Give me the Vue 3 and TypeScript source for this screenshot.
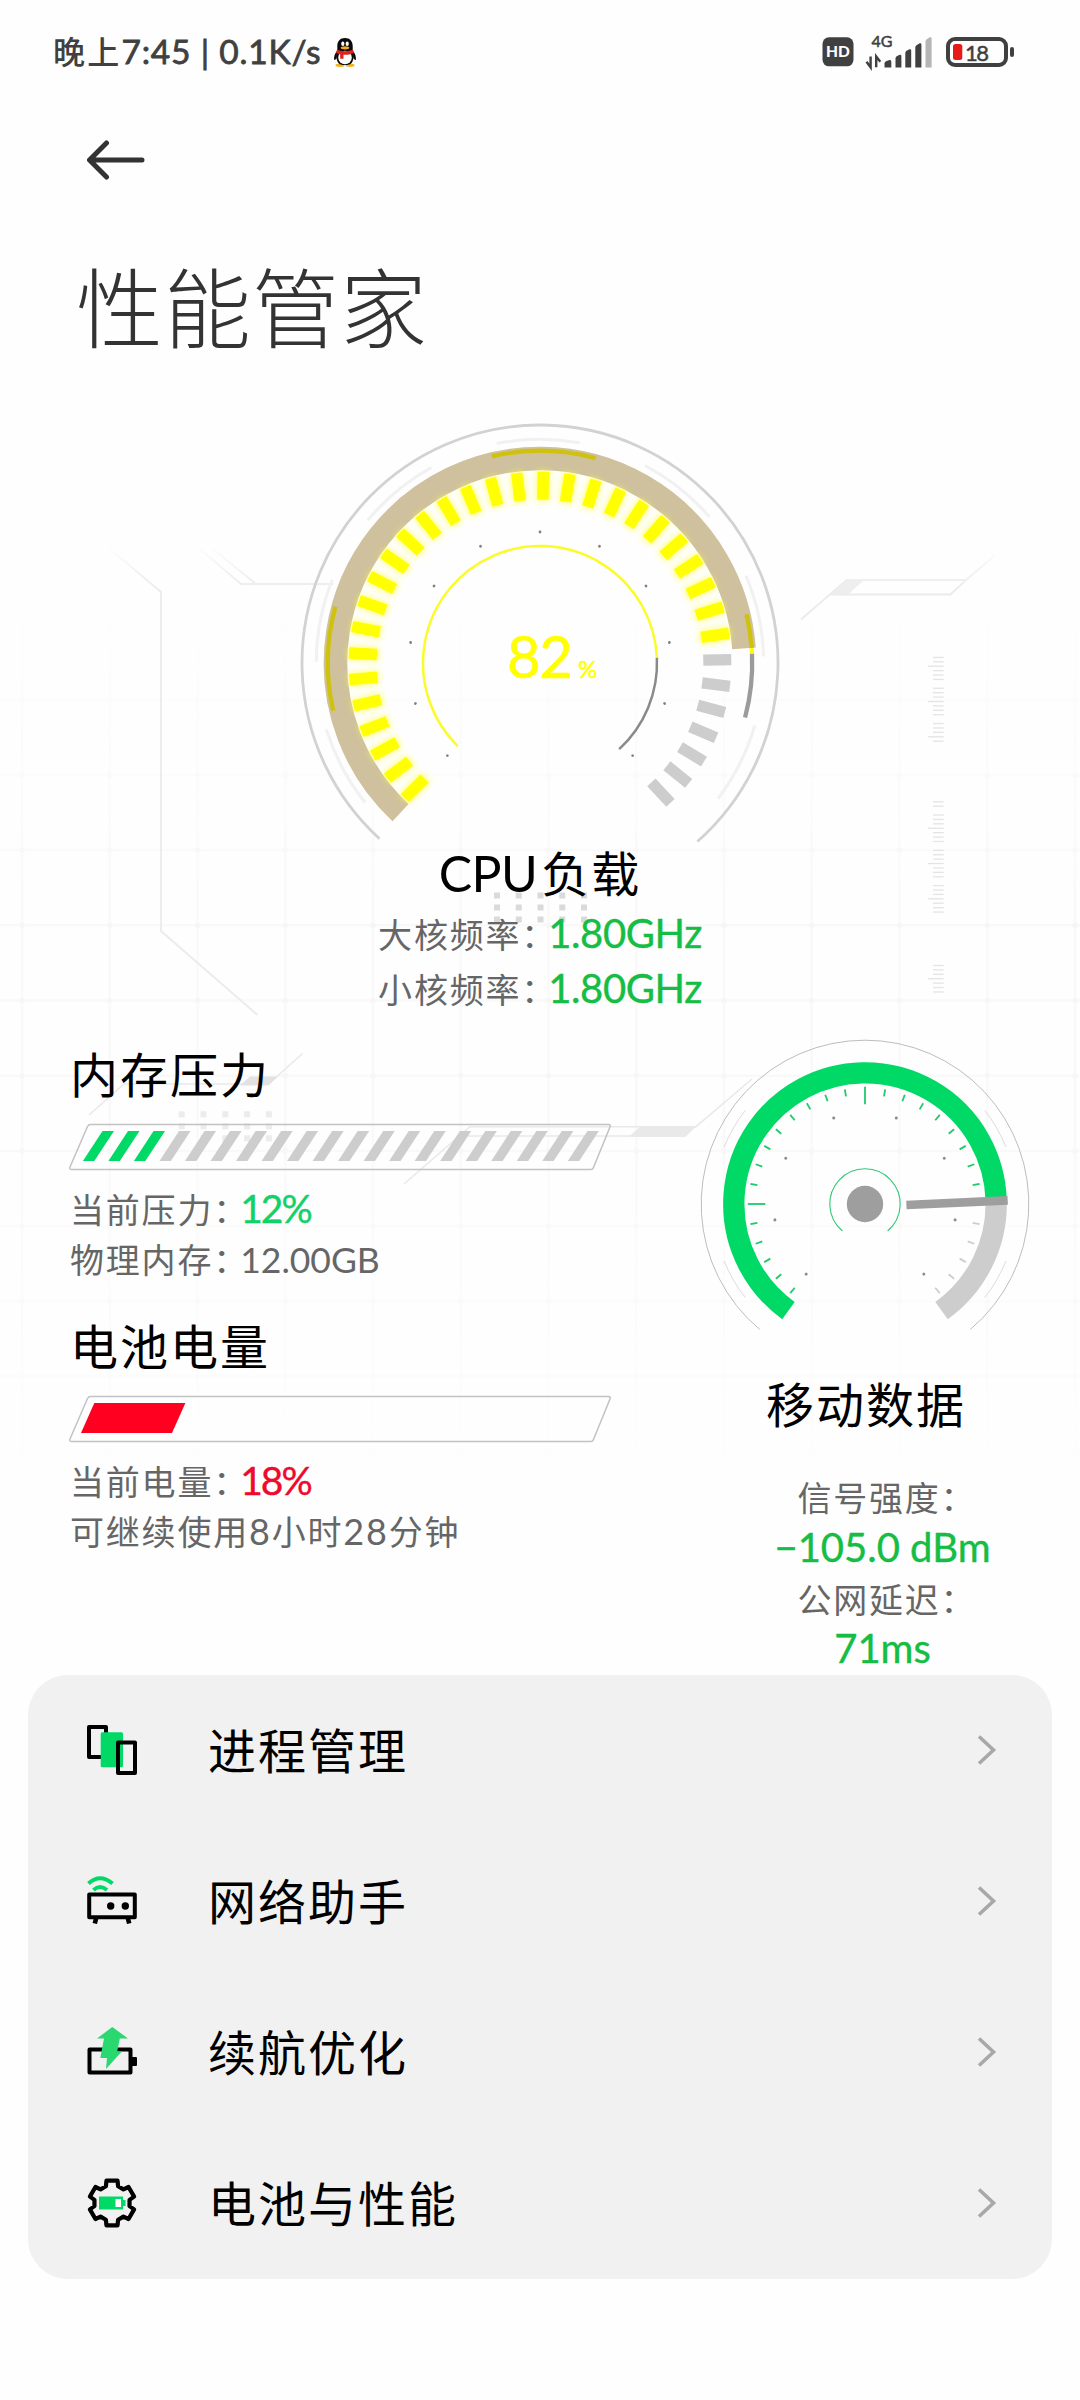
<script setup lang="ts">
interface MenuItem {
  id: 'process' | 'network' | 'endurance' | 'battery'
  label: string
}

const menu: MenuItem[] = [
  { id: 'process', label: '进程管理' },
  { id: 'network', label: '网络助手' },
  { id: 'endurance', label: '续航优化' },
  { id: 'battery', label: '电池与性能' },
]

const round = (n: number) => Math.round(n * 100) / 100

/* Angles are degrees, clockwise from twelve o'clock. */
function point(r: number, deg: number): string {
  const a = (deg * Math.PI) / 180
  return `${round(r * Math.sin(a))} ${round(-r * Math.cos(a))}`
}

function arc(r: number, from: number, to: number): string {
  const large = to - from > 180 ? 1 : 0
  return `M${point(r, from)}A${r} ${r} 0 ${large} 1 ${point(r, to)}`
}

const range = (n: number) => Array.from({ length: n }, (_, i) => i)

const cpuSegments = range(35).map((i) => ({ angle: -135 + i * 8, on: i < 28 }))
const cpuDots = range(11).map((i) => -135 + i * 27)
const cpuFaint: [number, number][] = [
  [-128.6, -107.3], [-89.7, -68.2], [-50.3, -29], [-11.2, 10.2],
  [28, 49.3], [67, 88.3], [106.2, 127.3],
]

const netTicks = range(29)
  .map((i) => -140 + i * 10)
  .filter((a) => a !== 90)
const netDots = [-140, -100, -60, -20, 20, 60, 100, 140]
const netFaint: [number, number][] = [[-128, -112], [-68, -52], [52, 68], [112, 128]]

const stripes = range(20)

const gridX = range(13).map((i) => round(22 + i * 87.75))
const gridY = range(12).map((i) => round(624.5 + i * 75.2))

function ruler(top: number, count: number, longAt: number) {
  return range(count)
    .filter((i) => i % 8 !== (longAt + 4) % 8)
    .map((i) => ({ y: round(top + i * 4.41), long: i % 8 === longAt }))
}
const rulers = [...ruler(657.4, 20, 2), ...ruler(801.8, 26, 6), ...ruler(965.5, 7, 3)]

const gear = (() => {
  const pts: string[] = []
  for (let t = 0; t < 6; t++) {
    const c = t * 60
    pts.push(point(17.8, c - 20), point(23, c - 14), point(23, c + 14), point(17.8, c + 20))
  }
  return pts.join(' ').replace(/(\S+) (\S+)/g, '$1,$2')
})()
</script>

<template>
  <div class="screen">
    <svg class="backdrop" width="1080" height="1675" viewBox="0 0 1080 1675">
      <defs>
        <linearGradient id="fadeY" x1="0" y1="600" x2="0" y2="1480" gradientUnits="userSpaceOnUse">
          <stop offset="0" stop-color="#fff" stop-opacity="0" />
          <stop offset="0.35" stop-color="#fff" />
          <stop offset="0.6" stop-color="#fff" />
          <stop offset="1" stop-color="#fff" stop-opacity="0" />
        </linearGradient>
        <mask id="gridMask" maskUnits="userSpaceOnUse" x="0" y="600" width="1080" height="880">
          <rect x="0" y="600" width="1080" height="880" fill="url(#fadeY)" />
        </mask>
        <linearGradient id="lineFade" x1="0" y1="548" x2="0" y2="590" gradientUnits="userSpaceOnUse">
          <stop offset="0" stop-color="#ebebeb" stop-opacity="0.1" />
          <stop offset="1" stop-color="#ebebeb" />
        </linearGradient>
      </defs>
      <g mask="url(#gridMask)" stroke="#f9f9f9" stroke-width="2.4">
        <line v-for="x in gridX" :key="'x' + x" :x1="x" :x2="x" y1="600" y2="1480" />
        <line v-for="y in gridY" :key="'y' + y" x1="0" x2="1080" :y1="y" :y2="y" />
        <template v-for="x in gridX" :key="'c' + x">
          <circle v-for="y in gridY" :key="y" :cx="x" :cy="y" r="2.8" fill="#f6f6f6" stroke="none" />
        </template>
      </g>
      <g fill="none" stroke="url(#lineFade)" stroke-width="1.8">
        <path d="M110 549L161 592V931L257.500 1015" />
        <path d="M200 549L241 584H333.500M213 549L256 584" />
        <path d="M801 619.500L846.500 580H966L995 555M966 580L950.500 594.500H830" />
      </g>
      <path d="M846.500 580H864L848 594.500H830Z" fill="#eee" />
      <g stroke="#e4e4e4" stroke-width="1.3">
        <line
          v-for="t in rulers"
          :key="t.y"
          :x1="t.long ? 928 : 933"
          x2="943.700"
          :y1="t.y"
          :y2="t.y"
        />
      </g>
      <g fill="#dadada">
        <template v-for="r in 3" :key="r">
          <rect
            v-for="c in 5"
            :key="c"
            :x="494 + (c - 1) * 21.75"
            :y="892.5 + (r - 1) * 12"
            width="6"
            height="6"
          />
        </template>
      </g>
      <g fill="#ececec">
        <template v-for="r in 3" :key="r">
          <rect
            v-for="c in 5"
            :key="c"
            :x="178.7 + (c - 1) * 21.8"
            :y="1111.3 + (r - 1) * 12"
            width="6"
            height="6"
          />
        </template>
      </g>
      <g fill="none" stroke="#e9e9e9" stroke-width="1.6">
        <path d="M89 1115L124 1084H245M268 1084.500L302.500 1053.500" />
        <path d="M404 1184L469.800 1126.700H696L752 1079M457.500 1136H686" />
      </g>
      <path d="M250 1076.500H278L268.500 1085.500H240Z" fill="#e2e2e2" />
      <path d="M640 1126.700H696L685.500 1136.700H629Z" fill="#e9e9e9" />
    </svg>

    <header class="status">
      <div class="status-left">
        <span class="status-text">晚上<span class="lat">7:45 | 0.1K/s</span></span>
        <svg class="qq" width="24" height="30" viewBox="0 0 24 30">
          <ellipse cx="7" cy="28.200" rx="4.500" ry="1.700" fill="#f2b51c" />
          <ellipse cx="17" cy="28.200" rx="4.500" ry="1.700" fill="#f2b51c" />
          <path d="M4 14C1.500 17 .8 20 1.200 23C2.200 23.500 3 22 3.800 20.500ZM20 14c2.500 3 3.200 6 2.800 9c-1 .5-1.800-1-2.600-2.500Z" fill="#0a0a0a" />
          <path d="M12 1C7 1 4.300 4.500 4.300 9v5C3 17 2.800 21 4.500 24.500S9 28 12 28s5.800 0 7.500-3.500s1.500-7.500.2-10.500V9C19.700 4.500 17 1 12 1Z" fill="#0a0a0a" />
          <ellipse cx="12" cy="20.500" rx="6.800" ry="6.800" fill="#fff" />
          <ellipse cx="9.800" cy="6.800" rx="1.600" ry="2.200" fill="#fff" />
          <ellipse cx="14.200" cy="6.800" rx="1.600" ry="2.200" fill="#fff" />
          <ellipse cx="12" cy="10.800" rx="4.300" ry="1.600" fill="#f2a91c" />
          <path d="M4 12.500c4.500 2.300 11.500 2.300 16 0l.8 3.200c-3.500 2-8 2.300-10.300 2v4h-3.300v-4.300c-2-.4-3.200-1-4-1.700Z" fill="#e0211c" />
        </svg>
      </div>
      <svg class="status-icons" width="200" height="56" viewBox="818 24 200 56">
        <rect x="822.500" y="37.300" width="31" height="29" rx="6.500" fill="#404040" />
        <text x="838" y="57.400" text-anchor="middle" class="hd">HD</text>
        <text x="871.500" y="46.800" class="g4">4G</text>
        <path d="M870.600 56.500V67.300L866.500 61.800M876.200 67.300V56.500L880.300 61.800" fill="none" stroke="#404040" stroke-width="2.400" />
        <path d="M884.500 67.500v-4q0-1.500 1.500-2.200l3.500-1.300q1.800-.4 1.800 1.500v6Z" fill="#404040" />
        <path d="M895.500 67.500v-9q0-1.500 1.200-2.200l3-1.500q1.700-.5 1.700 1.200v11.500Z" fill="#404040" />
        <path d="M905.300 67.500V53q0-1.500 1.200-2.200l3-1.500q1.700-.5 1.700 1.200v17Z" fill="#404040" />
        <path d="M915.300 67.500v-20q0-1.500 1.200-2.200l3.200-2q1.700-.5 1.700 1.200v23Z" fill="#404040" />
        <path d="M925.500 67.500v-26q0-1.500 1.200-2.200l3.200-2q1.700-.5 1.700 1.200v29Z" fill="#b5b5b5" />
        <rect x="948" y="39" width="58" height="26" rx="7" fill="none" stroke="#404040" stroke-width="4" />
        <rect x="953" y="44" width="9.300" height="16" rx="2.500" fill="#e6191b" />
        <rect x="1010" y="47" width="4" height="10" rx="2" fill="#404040" />
        <text x="965" y="60.600" class="bat">18</text>
      </svg>
    </header>

    <nav class="nav">
      <svg width="60" height="42" viewBox="0 0 60 42">
        <path d="M55 21H3.500M19.500 4L2.500 21L19.500 38" fill="none" stroke="#333" stroke-width="5" stroke-linecap="round" stroke-linejoin="round" />
      </svg>
    </nav>

    <h1 class="title">性能管家</h1>

    <section class="cpu">
      <svg class="cpu-gauge" width="500" height="445" viewBox="-250 -261 500 445">
        <defs>
          <filter id="glow" x="-60%" y="-30%" width="220%" height="160%">
            <feGaussianBlur stdDeviation="3" />
          </filter>
        </defs>
        <g fill="none">
          <path :d="arc(238, -137.6, 138.6)" stroke="#d2d2d2" stroke-width="2.800" />
          <path
            v-for="a in cpuFaint"
            :key="a[0]"
            :d="arc(223.7, a[0], a[1])"
            stroke="#f1f1f1"
            stroke-width="3"
          />
          <path :d="arc(204.5, -137, 85.9)" stroke="#cfc19d" stroke-width="23.600" />
          <g stroke-width="4.300">
            <path :d="arc(212.2, -103, -74.6)" stroke="#cfc20f" />
            <path :d="arc(212.2, -13.1, 15.2)" stroke="#cfc20f" />
            <path :d="arc(212.2, 76.7, 86)" stroke="#cfc20f" />
            <path :d="arc(212.2, 86, 87.5)" stroke="#ffff00" />
            <path :d="arc(212.2, 87.5, 104.9)" stroke="#9b9b9b" />
          </g>
          <path :d="arc(117, -135.3, 87.5)" stroke="#fbfb2a" stroke-width="2.500" />
          <path :d="arc(117, 87.5, 137.4)" stroke="#8a8a8a" stroke-width="2.500" />
        </g>
        <g v-for="s in cpuSegments" :key="s.angle" :transform="`rotate(${s.angle})`">
          <rect v-if="s.on" x="-6.500" y="-192" width="13" height="30" fill="#ffff30" opacity="0.750" filter="url(#glow)" />
          <rect x="-5.700" y="-191.300" width="11.400" height="28" :fill="s.on ? '#ffff00' : '#cdcdcd'" />
        </g>
        <g v-for="a in cpuDots" :key="a" :transform="`rotate(${a})`">
          <circle cx="0" cy="-131" r="1.400" fill="#808080" />
        </g>
        <text x="-33" y="14.500" class="cpu-num">82</text>
        <text x="38" y="14.500" class="cpu-pct">%</text>
      </svg>
      <h2 class="cpu-title"><span class="lat">CPU</span>负载</h2>
      <p class="freq">大核频率<i>：</i><b>1.80GHz</b></p>
      <p class="freq">小核频率<i>：</i><b>1.80GHz</b></p>
    </section>

    <div class="panels">
      <div class="left">
        <section class="stat">
          <h2>内存压力</h2>
          <svg class="bar" width="542" height="48" viewBox="69 1123 542 48">
            <path d="M90.500 1124.500H608.500Q611 1124.500 610 1127L593.500 1167.500Q592.800 1169.500 591 1169.500H72Q69 1169.500 70 1167L87.500 1126.500Q88.500 1124.500 90.500 1124.500Z" fill="none" stroke="#c2c2c2" stroke-width="1.500" />
            <path
              v-for="i in stripes"
              :key="i"
              d="M102.500 1131H114L94.300 1161H82.900Z"
              :transform="`translate(${i * 25.52})`"
              :fill="i < 3 ? '#00d966' : '#cdcdcd'"
            />
          </svg>
          <p>当前压力<i>：</i><b class="green">12%</b></p>
          <p>物理内存<i>：</i><span class="lat">12.00GB</span></p>
        </section>
        <section class="stat">
          <h2>电池电量</h2>
          <svg class="bar" width="542" height="48" viewBox="69 1123 542 48">
            <path d="M90.500 1124.500H608.500Q611 1124.500 610 1127L593.500 1167.500Q592.800 1169.500 591 1169.500H72Q69 1169.500 70 1167L87.500 1126.500Q88.500 1124.500 90.500 1124.500Z" fill="none" stroke="#c2c2c2" stroke-width="1.500" />
            <path d="M94.300 1131H185.400L172 1161H81Z" fill="#ff0020" />
          </svg>
          <p>当前电量<i>：</i><b class="red">18%</b></p>
          <p>可继续使用<span class="num">8</span>小时<span class="num">28</span>分钟</p>
        </section>
      </div>

      <section class="right">
        <svg class="net-gauge" width="332" height="310" viewBox="-166 -168 332 310">
          <g fill="none">
            <path :d="arc(163.8, -140, 140)" stroke="#bdbdbd" stroke-width="1" />
            <path v-for="a in netFaint" :key="a[0]" :d="arc(152, a[0], a[1])" stroke="#dcdcdc" stroke-width="1" />
            <path :d="arc(131.2, -144.3, 88)" stroke="#00d966" stroke-width="21.300" />
            <path :d="arc(131.2, 88, 144.3)" stroke="#cdcdcd" stroke-width="21.300" />
            <path :d="arc(35.2, -140, 140)" stroke="#2fc777" stroke-width="1.100" />
          </g>
          <g v-for="a in netTicks" :key="a" :transform="`rotate(${a})`">
            <line
              x1="0"
              x2="0"
              :y1="a % 90 === 0 ? -117.2 : -116.3"
              :y2="a % 90 === 0 ? -99.7 : -109.3"
              :stroke="a < 90 ? '#1fc96c' : '#cdcdcd'"
              stroke-width="1.800"
            />
          </g>
          <g v-for="a in netDots" :key="a" :transform="`rotate(${a})`">
            <circle cx="0" cy="-91.500" r="1.500" fill="#8c8c8c" />
          </g>
          <circle r="18.200" fill="#9e9e9e" />
          <line x1="41.400" y1="1" x2="142.700" y2="-3.600" stroke="#9e9e9e" stroke-width="8.600" />
        </svg>
        <h2>移动数据</h2>
        <div class="net-info">
          <p>信号强度<i>：</i></p>
          <p><b>−105.0 dBm</b></p>
          <p>公网延迟<i>：</i></p>
          <p><b>71ms</b></p>
        </div>
      </section>
    </div>

    <ul class="menu">
      <li v-for="item in menu" :key="item.id">
        <svg v-if="item.id === 'process'" class="icon" width="52" height="52" viewBox="-1 -1 52 52">
          <path d="M19 10V2H2V32H14" fill="none" stroke="#000" stroke-width="4" stroke-linejoin="round" />
          <rect x="13.700" y="7.300" width="22.300" height="35" rx="1.500" fill="#00d966" />
          <rect x="31" y="17.500" width="17" height="30.500" fill="none" stroke="#000" stroke-width="4" stroke-linejoin="round" />
        </svg>
        <svg v-else-if="item.id === 'network'" class="icon" width="52" height="52" viewBox="-1 -1 52 52">
          <path d="M1.500 7.500Q13 -3 25.500 7.500M6.500 14Q13 8 20 14" fill="none" stroke="#00d966" stroke-width="4" />
          <rect x="2.200" y="18.600" width="45.600" height="22.600" fill="none" stroke="#000" stroke-width="4" stroke-linejoin="round" />
          <circle cx="23.700" cy="30" r="3.700" />
          <circle cx="38.300" cy="30" r="3.700" />
          <path d="M9.200 42L7.800 47.500M40.800 42L42.200 47.500" stroke="#000" stroke-width="4.600" />
        </svg>
        <svg v-else-if="item.id === 'endurance'" class="icon" width="52" height="52" viewBox="-1 0 52 52">
          <path d="M2.500 23.500H43.500V46.500H2.500Z" fill="none" stroke="#000" stroke-width="4" stroke-linejoin="round" />
          <rect x="44" y="31" width="6" height="9" rx="1" />
          <path d="M25.300 1L41 12.500H32.800L30.200 25.500H34.800L19 43L20 32H13.300L17 12.500H10Z" fill="#29d86f" />
        </svg>
        <svg v-else class="icon" width="52" height="52" viewBox="-26 -26 52 52">
          <polygon :points="gear" fill="none" stroke="#000" stroke-width="4.200" stroke-linejoin="round" />
          <path d="M-13 -6.500H11V-3H13.500V3H11V6.500H-13Z" fill="#00d966" />
          <rect x="3.500" y="-4" width="5.500" height="8" fill="#fff" />
        </svg>
        <span class="menu-label">{{ item.label }}</span>
        <svg class="chev" width="22" height="32" viewBox="0 0 22 32">
          <path d="M3 2.500L17.500 16L3 29.500" fill="none" stroke="#a8a8a8" stroke-width="3.600" />
        </svg>
      </li>
    </ul>
  </div>
</template>

<style>
body {
  background: #fefefe;
}
</style>

<style scoped>
.screen {
  position: relative;
  width: 1080px;
  height: 2400px;
  overflow: hidden;
  background: #fefefe;
  color: #000;
  font-family: Lato, "Noto Sans CJK SC", sans-serif;
}
.screen * {
  box-sizing: border-box;
}
h1,
h2,
p,
ul {
  margin: 0;
  padding: 0;
  font-weight: 400;
}
b {
  font-weight: 400;
}
i {
  font-style: normal;
  letter-spacing: -7px;
}
.backdrop {
  position: absolute;
  left: 0;
  top: 0;
}
.status,
.nav,
.title,
.cpu,
.panels,
.menu {
  position: relative;
}
.status {
  height: 106px;
  display: flex;
  align-items: center;
  justify-content: space-between;
  padding: 0 62px 2px 53px;
}
.status-left {
  display: flex;
  align-items: center;
}
.status-text {
  font-size: 32px;
  line-height: 40px;
  letter-spacing: 2.2px;
  color: #404040;
  font-weight: 500;
  white-space: pre;
}
.status-text .lat {
  font-size: 33.500px;
  line-height: 30px;
  letter-spacing: 0.8px;
  font-weight: 400;
  -webkit-text-stroke: 0.8px #404040;
}
.qq {
  margin-left: 12px;
}
.hd {
  font: 900 15.500px Lato, sans-serif;
  fill: #fff;
}
.g4 {
  font: 400 16px Lato, sans-serif;
  fill: #404040;
  stroke: #404040;
  stroke-width: 0.5px;
}
.bat {
  font: 400 22px Lato, sans-serif;
  letter-spacing: -1.5px;
  fill: #404040;
  stroke: #404040;
  stroke-width: 0.5px;
}
.nav {
  height: 108px;
  display: flex;
  align-items: center;
  padding-left: 87px;
}
.title {
  height: 188px;
  line-height: 188px;
  padding: 1px 0 0 76px;
  font-size: 87px;
  font-weight: 300;
  letter-spacing: 1px;
  color: #333;
}
.cpu {
  display: flex;
  flex-direction: column;
  align-items: center;
}
.cpu-gauge {
  display: block;
}
.cpu-num {
  font: 400 58px Lato, sans-serif;
  letter-spacing: -1.5px;
  fill: #ffff00;
  stroke: #ffff00;
  stroke-width: 0.6px;
}
.cpu-pct {
  font: 400 24px Lato, sans-serif;
  fill: #ffff00;
  stroke: #ffff00;
  stroke-width: 0.5px;
}
.cpu-title {
  height: 61px;
  line-height: 53px;
  font-size: 48px;
  letter-spacing: 2px;
}
.cpu-title .lat {
  font-size: 50px;
  letter-spacing: -0.5px;
  margin-right: 4px;
}
.freq {
  height: 55px;
  line-height: 53px;
  font-size: 34px;
  letter-spacing: 1.8px;
  color: #666;
}
.freq b,
.net-info b {
  font-size: 40px;
  line-height: 40px;
  letter-spacing: -0.4px;
  color: #15bd45;
  -webkit-text-stroke: 0.4px #15bd45;
}
.net-info b {
  letter-spacing: 0;
}
.panels {
  height: 657px;
  display: flex;
}
.left {
  width: 699px;
  padding: 18px 0 0 69px;
}
.stat {
  height: 272px;
}
h2 {
  font-size: 48px;
  letter-spacing: 2px;
}
.stat h2 {
  height: 87px;
  line-height: 77px;
  padding-left: 1px;
}
.bar {
  display: block;
  margin-bottom: 14px;
}
.stat p {
  height: 49.500px;
  line-height: 49.500px;
  padding-left: 1px;
  font-size: 34px;
  letter-spacing: 1.8px;
  color: #666;
  white-space: nowrap;
}
.stat p .lat {
  font-size: 35.500px;
  line-height: 40px;
  letter-spacing: 0;
}
.stat p .num {
  font-size: 36px;
  line-height: 40px;
}
.stat b {
  font-size: 39px;
  line-height: 40px;
  letter-spacing: -2px;
}
.green {
  color: #12d169;
  -webkit-text-stroke: 0.4px #12d169;
}
.red {
  color: #ee0a2c;
  -webkit-text-stroke: 0.4px #ee0a2c;
}
.right {
  width: 332px;
  padding-top: 18px;
}
.net-gauge {
  display: block;
}
.right h2 {
  height: 118px;
  line-height: 117px;
  padding-left: 2px;
  text-align: center;
}
.net-info {
  width: 367px;
  padding-top: 9px;
  text-align: center;
}
.net-info p {
  height: 50.800px;
  line-height: 50.800px;
  font-size: 34px;
  letter-spacing: 1.8px;
  color: #666;
  white-space: nowrap;
}
.menu {
  width: 1024px;
  margin: 0 28px;
  border-radius: 40px;
  background: #f1f1f1;
  list-style: none;
}
.menu li {
  height: 151px;
  display: flex;
  align-items: center;
  padding: 0 54px 0 58px;
}
.icon,
.chev {
  flex: none;
  margin-bottom: 2px;
}
.menu-label {
  flex: 1;
  margin-left: 70px;
  font-size: 48px;
  line-height: 60px;
  letter-spacing: 2px;
}
</style>
